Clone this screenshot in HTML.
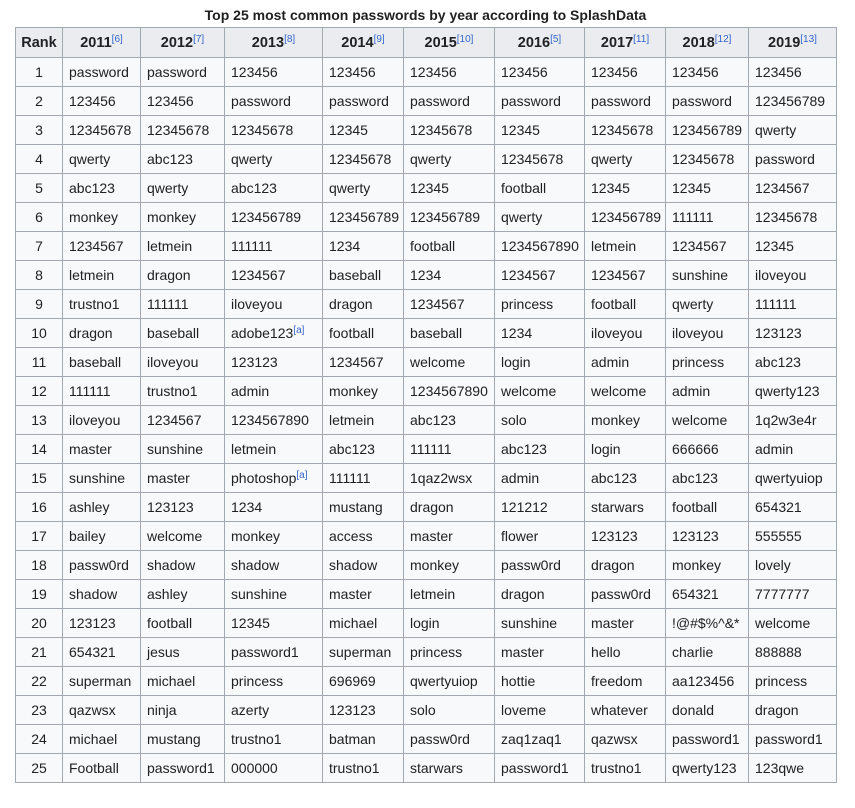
<!DOCTYPE html>
<html><head><meta charset="utf-8"><style>
html,body{margin:0;padding:0;background:#fff;}
body{font-family:"Liberation Sans",sans-serif;color:#202122;}
.cap{position:absolute;top:5px;left:15px;width:821px;text-align:center;font-weight:bold;font-size:14px;line-height:20px;}
table{position:absolute;top:27px;left:15px;border-collapse:collapse;table-layout:fixed;width:821px;font-size:14px;background:#f8f9fa;}
td,th{border:1px solid #a2a9b1;height:29px;padding:0 0 0 6px;box-sizing:border-box;white-space:nowrap;overflow:hidden;}
th{background:#eaecf0;font-weight:bold;text-align:center;padding:0;font-size:14.5px;height:30px;}
td:first-child{text-align:center;padding:0;}
sup{color:#3366cc;font-weight:normal;font-size:10px;vertical-align:5px;line-height:0;}
</style></head><body>
<div class="cap">Top 25 most common passwords by year according to SplashData</div>
<table>
<colgroup><col style="width:47px"><col style="width:78px"><col style="width:84px"><col style="width:98px"><col style="width:81px"><col style="width:91px"><col style="width:90px"><col style="width:81px"><col style="width:83px"><col style="width:88px"></colgroup>
<tr><th>Rank</th><th>2011<sup>[6]</sup></th><th>2012<sup>[7]</sup></th><th>2013<sup>[8]</sup></th><th>2014<sup>[9]</sup></th><th>2015<sup>[10]</sup></th><th>2016<sup>[5]</sup></th><th>2017<sup>[11]</sup></th><th>2018<sup>[12]</sup></th><th>2019<sup>[13]</sup></th></tr>
<tr><td>1</td><td>password</td><td>password</td><td>123456</td><td>123456</td><td>123456</td><td>123456</td><td>123456</td><td>123456</td><td>123456</td></tr>
<tr><td>2</td><td>123456</td><td>123456</td><td>password</td><td>password</td><td>password</td><td>password</td><td>password</td><td>password</td><td>123456789</td></tr>
<tr><td>3</td><td>12345678</td><td>12345678</td><td>12345678</td><td>12345</td><td>12345678</td><td>12345</td><td>12345678</td><td>123456789</td><td>qwerty</td></tr>
<tr><td>4</td><td>qwerty</td><td>abc123</td><td>qwerty</td><td>12345678</td><td>qwerty</td><td>12345678</td><td>qwerty</td><td>12345678</td><td>password</td></tr>
<tr><td>5</td><td>abc123</td><td>qwerty</td><td>abc123</td><td>qwerty</td><td>12345</td><td>football</td><td>12345</td><td>12345</td><td>1234567</td></tr>
<tr><td>6</td><td>monkey</td><td>monkey</td><td>123456789</td><td>123456789</td><td>123456789</td><td>qwerty</td><td>123456789</td><td>111111</td><td>12345678</td></tr>
<tr><td>7</td><td>1234567</td><td>letmein</td><td>111111</td><td>1234</td><td>football</td><td>1234567890</td><td>letmein</td><td>1234567</td><td>12345</td></tr>
<tr><td>8</td><td>letmein</td><td>dragon</td><td>1234567</td><td>baseball</td><td>1234</td><td>1234567</td><td>1234567</td><td>sunshine</td><td>iloveyou</td></tr>
<tr><td>9</td><td>trustno1</td><td>111111</td><td>iloveyou</td><td>dragon</td><td>1234567</td><td>princess</td><td>football</td><td>qwerty</td><td>111111</td></tr>
<tr><td>10</td><td>dragon</td><td>baseball</td><td>adobe123<sup>[a]</sup></td><td>football</td><td>baseball</td><td>1234</td><td>iloveyou</td><td>iloveyou</td><td>123123</td></tr>
<tr><td>11</td><td>baseball</td><td>iloveyou</td><td>123123</td><td>1234567</td><td>welcome</td><td>login</td><td>admin</td><td>princess</td><td>abc123</td></tr>
<tr><td>12</td><td>111111</td><td>trustno1</td><td>admin</td><td>monkey</td><td>1234567890</td><td>welcome</td><td>welcome</td><td>admin</td><td>qwerty123</td></tr>
<tr><td>13</td><td>iloveyou</td><td>1234567</td><td>1234567890</td><td>letmein</td><td>abc123</td><td>solo</td><td>monkey</td><td>welcome</td><td>1q2w3e4r</td></tr>
<tr><td>14</td><td>master</td><td>sunshine</td><td>letmein</td><td>abc123</td><td>111111</td><td>abc123</td><td>login</td><td>666666</td><td>admin</td></tr>
<tr><td>15</td><td>sunshine</td><td>master</td><td>photoshop<sup>[a]</sup></td><td>111111</td><td>1qaz2wsx</td><td>admin</td><td>abc123</td><td>abc123</td><td>qwertyuiop</td></tr>
<tr><td>16</td><td>ashley</td><td>123123</td><td>1234</td><td>mustang</td><td>dragon</td><td>121212</td><td>starwars</td><td>football</td><td>654321</td></tr>
<tr><td>17</td><td>bailey</td><td>welcome</td><td>monkey</td><td>access</td><td>master</td><td>flower</td><td>123123</td><td>123123</td><td>555555</td></tr>
<tr><td>18</td><td>passw0rd</td><td>shadow</td><td>shadow</td><td>shadow</td><td>monkey</td><td>passw0rd</td><td>dragon</td><td>monkey</td><td>lovely</td></tr>
<tr><td>19</td><td>shadow</td><td>ashley</td><td>sunshine</td><td>master</td><td>letmein</td><td>dragon</td><td>passw0rd</td><td>654321</td><td>7777777</td></tr>
<tr><td>20</td><td>123123</td><td>football</td><td>12345</td><td>michael</td><td>login</td><td>sunshine</td><td>master</td><td>!@#$%^&amp;*</td><td>welcome</td></tr>
<tr><td>21</td><td>654321</td><td>jesus</td><td>password1</td><td>superman</td><td>princess</td><td>master</td><td>hello</td><td>charlie</td><td>888888</td></tr>
<tr><td>22</td><td>superman</td><td>michael</td><td>princess</td><td>696969</td><td>qwertyuiop</td><td>hottie</td><td>freedom</td><td>aa123456</td><td>princess</td></tr>
<tr><td>23</td><td>qazwsx</td><td>ninja</td><td>azerty</td><td>123123</td><td>solo</td><td>loveme</td><td>whatever</td><td>donald</td><td>dragon</td></tr>
<tr><td>24</td><td>michael</td><td>mustang</td><td>trustno1</td><td>batman</td><td>passw0rd</td><td>zaq1zaq1</td><td>qazwsx</td><td>password1</td><td>password1</td></tr>
<tr><td>25</td><td>Football</td><td>password1</td><td>000000</td><td>trustno1</td><td>starwars</td><td>password1</td><td>trustno1</td><td>qwerty123</td><td>123qwe</td></tr>
</table>
</body></html>
